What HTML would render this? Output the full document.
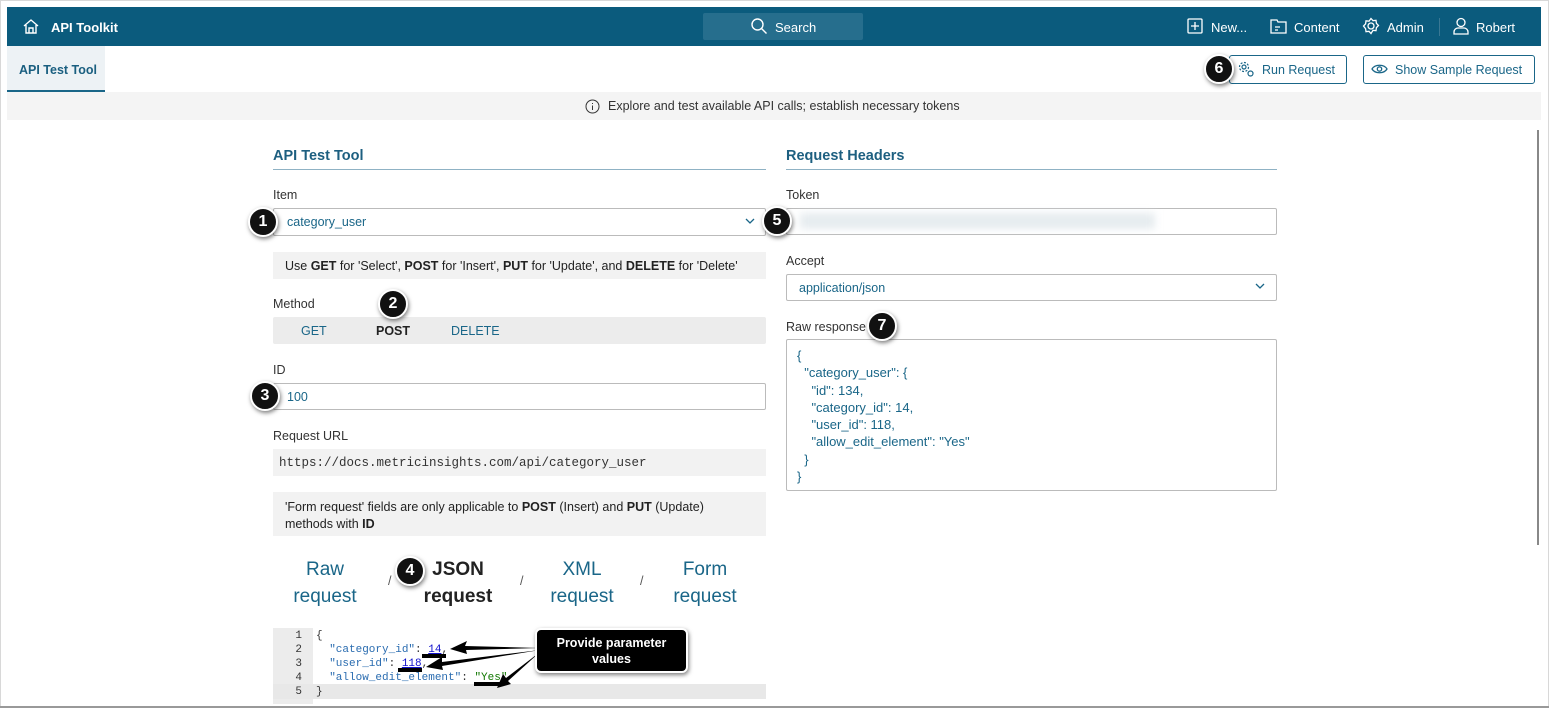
<!DOCTYPE html>
<html><head><meta charset="utf-8"><style>
*{box-sizing:border-box;margin:0;padding:0}
body{width:1549px;height:712px;background:#fff;font-family:"Liberation Sans",sans-serif;font-size:12.5px;color:#222;position:relative;overflow:hidden}
.a{position:absolute}
.frame{left:0;top:0;width:1549px;height:712px;border:1px solid #d8d8d8;border-bottom:none}
.top{left:7px;top:7px;width:1534px;height:39px;background:#0b5b7d;color:#fff}
.top span{position:absolute;top:13px;font-size:13px}
.lbl{font-size:12.5px;color:#333}
.inp{border:1px solid #bbb;border-radius:2px;background:#fff}
.blue{color:#1a6688}
.h{font-size:14.5px;font-weight:bold;color:#1d5f80;border-bottom:1px solid #8fb2c4;padding-bottom:5px}
.badge{width:30px;height:30px;border-radius:50%;background:#111;color:#fff;font-size:16px;font-weight:bold;text-align:center;line-height:26px;border:2px solid #fff;box-shadow:1px 2px 4px rgba(0,0,0,.5)}
.mono{font-family:"Liberation Mono",monospace}
.gray{background:#f2f2f2}
</style></head><body>
<div class="a frame"></div>
<div class="a top">
 <svg class="a" style="left:15px;top:11px" width="18" height="17" viewBox="0 0 18 17" fill="none" stroke="#fff" stroke-width="1.4"><path d="M2 8L9 2l7 6M4 7v8h10V7M7 15v-5h4v5"/></svg>
 <span style="left:44px;font-weight:bold">API Toolkit</span>
 <div class="a" style="left:696px;top:6px;width:160px;height:27px;background:#266e8d;border-radius:2px"></div>
 <svg class="a" style="left:743px;top:10px" width="18" height="18" viewBox="0 0 18 18" fill="none" stroke="#fff" stroke-width="1.4"><circle cx="7.5" cy="7.5" r="5.5"/><path d="M11.5 11.5l5 5"/></svg>
 <span style="left:768px">Search</span>
 <svg class="a" style="left:1180px;top:11px" width="16" height="16" viewBox="0 0 16 16" fill="none" stroke="#fff" stroke-width="1.3"><rect x="1" y="1" width="14" height="14" rx="1"/><path d="M8 4v8M4 8h8"/></svg>
 <span style="left:1204px">New...</span>
 <svg class="a" style="left:1263px;top:11px" width="17" height="16" viewBox="0 0 17 16" fill="none" stroke="#fff" stroke-width="1.3"><path d="M1 2h6l1 2h8v11H1z M5 9h5M5 12h3"/></svg>
 <span style="left:1287px">Content</span>
 <svg class="a" style="left:1355px;top:10px" width="18" height="18" viewBox="0 0 18 18" fill="none" stroke="#fff" stroke-width="1.3"><circle cx="9" cy="9" r="3"/><path d="M9 1.5l2 2.2 3-.4.4 3 2.1 2.2-2.1 2.2-.4 3-3-.4L9 16.5l-2-2.2-3 .4-.4-3L1.5 9l2.1-2.2.4-3 3 .4z"/></svg>
 <span style="left:1380px">Admin</span>
 <div class="a" style="left:1432px;top:11px;width:1px;height:18px;background:#3a7894"></div>
 <svg class="a" style="left:1446px;top:10px" width="16" height="18" viewBox="0 0 16 18" fill="none" stroke="#fff" stroke-width="1.3"><circle cx="8" cy="5.5" r="4"/><path d="M1 17v-2a4 4 0 0 1 4-4h6a4 4 0 0 1 4 4v2z"/></svg>
 <span style="left:1469px">Robert</span>
</div>
<div class="a" style="left:7px;top:46px;width:98px;height:46px;background:#edf2f5;border-bottom:2px solid #1a6688"></div>
<div class="a" style="left:19px;top:63px;font-size:12.5px;color:#1a5f80;font-weight:bold">API Test Tool</div>
<div class="a" style="left:1229px;top:55px;width:118px;height:29px;border:1px solid #1a6688;border-radius:3px"></div>
<svg class="a" style="left:1238px;top:61px" width="17" height="17" viewBox="0 0 17 17" fill="none" stroke="#1a6688" stroke-width="1.2"><circle cx="6" cy="6" r="2"/><circle cx="6" cy="6" r="4.5" stroke-dasharray="2 1.5"/><circle cx="12.5" cy="12.5" r="2.5"/></svg>
<div class="a blue" style="left:1262px;top:63px;font-size:12.5px">Run Request</div>
<div class="a" style="left:1363px;top:55px;width:172px;height:29px;border:1px solid #1a6688;border-radius:3px"></div>
<svg class="a" style="left:1371px;top:63px" width="17" height="12" viewBox="0 0 17 12" fill="none" stroke="#1a6688" stroke-width="1.3"><path d="M1 6C4 1 13 1 16 6 13 11 4 11 1 6z"/><circle cx="8.5" cy="6" r="2.2"/></svg>
<div class="a blue" style="left:1395px;top:63px;font-size:12.5px">Show Sample Request</div>
<div class="a badge" style="left:1204px;top:54px">6</div>
<div class="a" style="left:7px;top:92px;width:1534px;height:28px;background:#f4f4f4"></div>
<svg class="a" style="left:585px;top:99px" width="15" height="15" viewBox="0 0 15 15" fill="none" stroke="#333" stroke-width="1"><circle cx="7.5" cy="7.5" r="6.5"/><path d="M7.5 6.5v4.5M7.5 4v1"/></svg>
<div class="a" style="left:608px;top:99px;font-size:12.5px;color:#333">Explore and test available API calls; establish necessary tokens</div>
<div class="a" style="left:1537px;top:130px;width:2px;height:415px;background:#888"></div>

<div class="a h" style="left:273px;top:148px;width:493px">API Test Tool</div>
<div class="a lbl" style="left:273px;top:188px">Item</div>
<div class="a inp" style="left:273px;top:208px;width:493px;height:28px"></div>
<div class="a blue" style="left:287px;top:215px">category_user</div>
<svg class="a" style="left:745px;top:218px" width="10" height="7" viewBox="0 0 10 7" fill="none" stroke="#1a6688" stroke-width="1.3"><path d="M1 1l4 4 4-4"/></svg>
<div class="a gray" style="left:273px;top:252px;width:493px;height:27px"></div>
<div class="a" style="left:285px;top:259px;color:#222">Use <b>GET</b> for 'Select', <b>POST</b> for 'Insert', <b>PUT</b> for 'Update', and <b>DELETE</b> for 'Delete'</div>
<div class="a lbl" style="left:273px;top:297px">Method</div>
<div class="a" style="left:273px;top:317px;width:493px;height:27px;background:#ececec;border-radius:2px"></div>
<div class="a blue" style="left:301px;top:324px">GET</div>
<div class="a" style="left:376px;top:324px;font-weight:bold">POST</div>
<div class="a blue" style="left:451px;top:324px">DELETE</div>
<div class="a lbl" style="left:273px;top:363px">ID</div>
<div class="a inp" style="left:273px;top:383px;width:493px;height:27px"></div>
<div class="a blue" style="left:287px;top:390px">100</div>
<div class="a lbl" style="left:273px;top:429px">Request URL</div>
<div class="a gray" style="left:273px;top:449px;width:493px;height:27px"></div>
<div class="a mono" style="left:279px;top:456px;font-size:12.5px;color:#333">https://docs.metricinsights.com/api/category_user</div>
<div class="a gray" style="left:273px;top:492px;width:493px;height:44px"></div>
<div class="a" style="left:285px;top:499px;line-height:17px">'Form request' fields are only applicable to <b>POST</b> (Insert) and <b>PUT</b> (Update)<br>methods with <b>ID</b></div>
<div class="a blue" style="left:285px;top:556px;width:80px;text-align:center;font-size:19px;line-height:27px">Raw<br>request</div>
<div class="a" style="left:388px;top:574px;color:#555">/</div>
<div class="a" style="left:418px;top:556px;width:80px;text-align:center;font-size:19px;line-height:27px;font-weight:bold;color:#222">JSON<br>request</div>
<div class="a" style="left:520px;top:574px;color:#555">/</div>
<div class="a blue" style="left:542px;top:556px;width:80px;text-align:center;font-size:19px;line-height:27px">XML<br>request</div>
<div class="a" style="left:640px;top:574px;color:#555">/</div>
<div class="a blue" style="left:665px;top:556px;width:80px;text-align:center;font-size:19px;line-height:27px">Form<br>request</div>
<div class="a" style="left:273px;top:628px;width:40px;height:76px;background:#ececec"></div>
<div class="a" style="left:273px;top:684px;width:493px;height:15px;background:#e8e8e8"></div>
<div class="a mono" style="left:278px;top:629px;font-size:11px;line-height:14px;color:#333;text-align:right;width:24px">1<br>2<br>3<br>4<br>5</div>
<div class="a mono" style="left:316px;top:629px;font-size:11px;line-height:14px;color:#333;white-space:pre">{
  <span style="color:#2a6cb0">"category_id"</span>: <span style="color:#11c;text-decoration:underline">14</span>,
  <span style="color:#2a6cb0">"user_id"</span>: <span style="color:#11c;text-decoration:underline">118</span>,
  <span style="color:#2a6cb0">"allow_edit_element"</span>: <span style="color:#170">"Yes"</span>
}</div>
<div class="a" style="left:422px;top:654px;width:24px;height:4px;background:#000"></div>
<div class="a" style="left:398px;top:668px;width:24px;height:4px;background:#000"></div>
<div class="a" style="left:474px;top:682px;width:28px;height:4px;background:#000"></div>
<svg class="a" style="left:420px;top:630px" width="140" height="70" viewBox="420 630 140 70" fill="#000"><path d="M540 648L465 646 l2-5 -17 8 17 5 -1-4z"/><path d="M540 650L442 662 l0-5 -16 10 17 3 -1-4z"/><path d="M540 652L506 678 l-3-4 -6 14 14-4 -3-3z"/></svg>
<div class="a" style="left:535px;top:628px;width:153px;height:45px;background:#000;border:2px solid #fff;border-radius:6px;box-shadow:1px 2px 4px rgba(0,0,0,.5);color:#fff;font-weight:bold;font-size:12.5px;text-align:center;line-height:16px;padding-top:5px">Provide parameter<br>values</div>

<div class="a h" style="left:786px;top:148px;width:491px">Request Headers</div>
<div class="a lbl" style="left:786px;top:188px">Token</div>
<div class="a inp" style="left:786px;top:208px;width:491px;height:27px"></div>
<div class="a" style="left:800px;top:213px;width:355px;height:16px;background:#e6ecef;filter:blur(4px)"></div>
<div class="a lbl" style="left:786px;top:254px">Accept</div>
<div class="a inp" style="left:786px;top:274px;width:491px;height:27px"></div>
<div class="a blue" style="left:799px;top:281px">application/json</div>
<svg class="a" style="left:1255px;top:283px" width="10" height="7" viewBox="0 0 10 7" fill="none" stroke="#1a6688" stroke-width="1.3"><path d="M1 1l4 4 4-4"/></svg>
<div class="a lbl" style="left:786px;top:320px">Raw response</div>
<div class="a inp" style="left:786px;top:339px;width:491px;height:152px"></div>
<div class="a blue" style="left:797px;top:347px;line-height:17.3px;white-space:pre;font-size:13px">{
  "category_user": {
    "id": 134,
    "category_id": 14,
    "user_id": 118,
    "allow_edit_element": "Yes"
  }
}</div>

<div class="a badge" style="left:248px;top:207px">1</div>
<div class="a badge" style="left:378px;top:289px">2</div>
<div class="a badge" style="left:250px;top:381px">3</div>
<div class="a badge" style="left:395px;top:556px">4</div>
<div class="a badge" style="left:762px;top:206px">5</div>
<div class="a badge" style="left:867px;top:311px">7</div>
<div class="a" style="left:0;top:706px;width:1549px;height:6px;border-top:2px solid #999;background:#fff"></div>
</body></html>
